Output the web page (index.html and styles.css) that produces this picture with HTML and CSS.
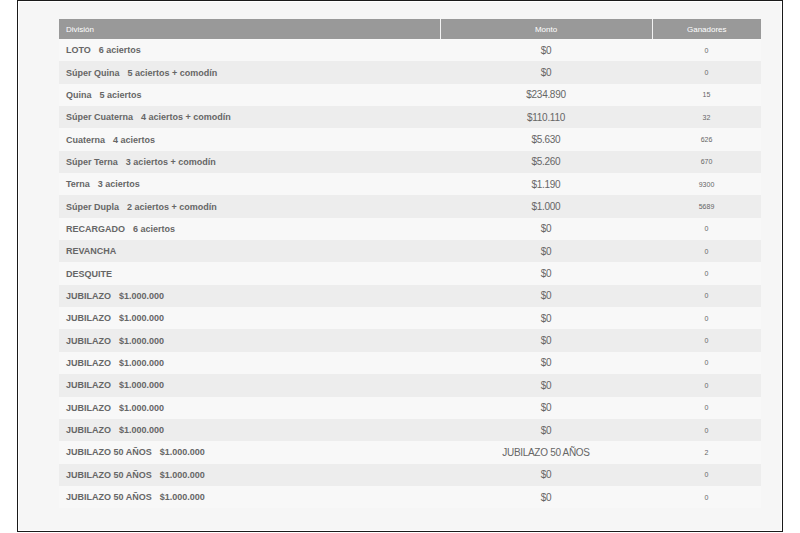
FILE: index.html
```html
<!DOCTYPE html>
<html lang="es">
<head>
<meta charset="utf-8">
<link rel="stylesheet" href="styles.css">
</head>
<body>
<div class="frame">
  <table class="prizes">
    <colgroup>
      <col class="c-div">
      <col class="c-monto">
      <col class="c-gan">
    </colgroup>
    <thead>
      <tr><th class="h-div">División</th><th>Monto</th><th>Ganadores</th></tr>
    </thead>
    <tbody>
      <tr><td class="div">LOTO<span class="sub">6 aciertos</span></td><td class="monto">$0</td><td class="gan">0</td></tr>
      <tr><td class="div">Súper Quina<span class="sub">5 aciertos + comodín</span></td><td class="monto">$0</td><td class="gan">0</td></tr>
      <tr><td class="div">Quina<span class="sub">5 aciertos</span></td><td class="monto">$234.890</td><td class="gan">15</td></tr>
      <tr><td class="div">Súper Cuaterna<span class="sub">4 aciertos + comodín</span></td><td class="monto">$110.110</td><td class="gan">32</td></tr>
      <tr><td class="div">Cuaterna<span class="sub">4 aciertos</span></td><td class="monto">$5.630</td><td class="gan">626</td></tr>
      <tr><td class="div">Súper Terna<span class="sub">3 aciertos + comodín</span></td><td class="monto">$5.260</td><td class="gan">670</td></tr>
      <tr><td class="div">Terna<span class="sub">3 aciertos</span></td><td class="monto">$1.190</td><td class="gan">9300</td></tr>
      <tr><td class="div">Súper Dupla<span class="sub">2 aciertos + comodín</span></td><td class="monto">$1.000</td><td class="gan">5689</td></tr>
      <tr><td class="div">RECARGADO<span class="sub">6 aciertos</span></td><td class="monto">$0</td><td class="gan">0</td></tr>
      <tr><td class="div">REVANCHA</td><td class="monto">$0</td><td class="gan">0</td></tr>
      <tr><td class="div">DESQUITE</td><td class="monto">$0</td><td class="gan">0</td></tr>
      <tr><td class="div">JUBILAZO<span class="sub">$1.000.000</span></td><td class="monto">$0</td><td class="gan">0</td></tr>
      <tr><td class="div">JUBILAZO<span class="sub">$1.000.000</span></td><td class="monto">$0</td><td class="gan">0</td></tr>
      <tr><td class="div">JUBILAZO<span class="sub">$1.000.000</span></td><td class="monto">$0</td><td class="gan">0</td></tr>
      <tr><td class="div">JUBILAZO<span class="sub">$1.000.000</span></td><td class="monto">$0</td><td class="gan">0</td></tr>
      <tr><td class="div">JUBILAZO<span class="sub">$1.000.000</span></td><td class="monto">$0</td><td class="gan">0</td></tr>
      <tr><td class="div">JUBILAZO<span class="sub">$1.000.000</span></td><td class="monto">$0</td><td class="gan">0</td></tr>
      <tr><td class="div">JUBILAZO<span class="sub">$1.000.000</span></td><td class="monto">$0</td><td class="gan">0</td></tr>
      <tr><td class="div">JUBILAZO 50 AÑOS<span class="sub">$1.000.000</span></td><td class="monto">JUBILAZO 50 AÑOS</td><td class="gan">2</td></tr>
      <tr><td class="div">JUBILAZO 50 AÑOS<span class="sub">$1.000.000</span></td><td class="monto">$0</td><td class="gan">0</td></tr>
      <tr><td class="div">JUBILAZO 50 AÑOS<span class="sub">$1.000.000</span></td><td class="monto">$0</td><td class="gan">0</td></tr>
    </tbody>
  </table>
</div>
</body>
</html>
```
FILE: styles.css
```css
html, body {
  margin: 0;
  padding: 0;
  background: #ffffff;
}
body {
  font-family: "Liberation Sans", Arial, sans-serif;
}
.frame {
  box-sizing: border-box;
  margin-left: 17px;
  width: 766px;
  height: 532px;
  border: 1px solid #1a1a1a;
  box-shadow: inset 0 0 0 1px #ffffff;
  background: #f6f6f6;
  padding: 18px 20px 0 41px;
}
.prizes {
  width: 702px;
  border-collapse: collapse;
  table-layout: fixed;
}
.c-div { width: 381px; }
.c-monto { width: 212px; }
.c-gan { width: 109px; }
.prizes th {
  background: #999999;
  color: #ffffff;
  font-size: 8px;
  font-weight: normal;
  height: 20px;
  padding: 0;
  text-align: center;
  border-left: 1px solid #f2f2f2;
}
.prizes th.h-div {
  text-align: left;
  padding-left: 7px;
  border-left: none;
}
.prizes td {
  height: 22.35px;
  padding: 0;
  box-sizing: border-box;
  color: #666666;
}
.prizes tbody tr:nth-child(odd) td { background: #f8f8f8; }
.prizes tbody tr:nth-child(even) td { background: #ededed; }
.div {
  font-size: 9px;
  font-weight: bold;
  padding-left: 7px !important;
  color: #6e6e6e;
}
.sub {
  margin-left: 8px;
}
.monto {
  font-size: 10px;
  letter-spacing: -0.3px;
  text-align: center;
  color: #757575;
}
.gan {
  font-size: 7px;
  text-align: center;
  color: #8a8a8a;
}
```
